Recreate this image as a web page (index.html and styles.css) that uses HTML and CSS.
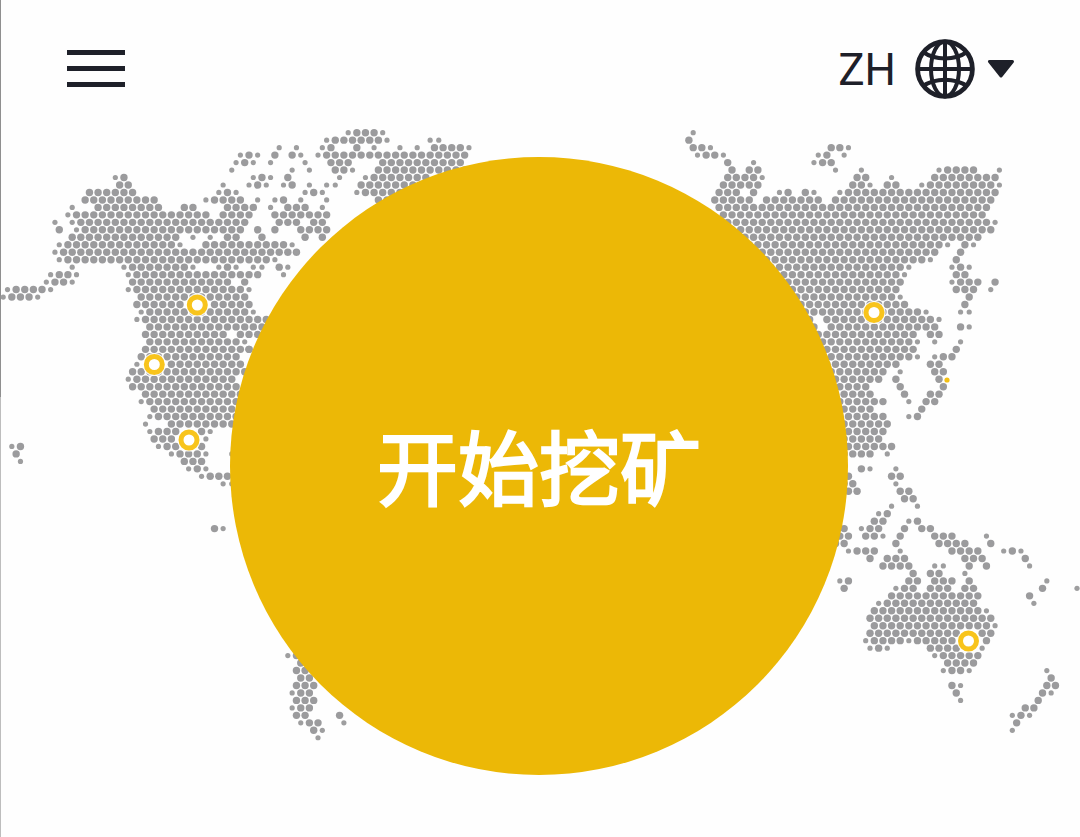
FILE: index.html
```html
<!DOCTYPE html>
<html lang="zh">
<head>
<meta charset="utf-8">
<title>开始挖矿</title>
<link rel="stylesheet" href="styles.css">
</head>
<body>
<main class="stage">
  <svg class="map" id="map" viewBox="0 0 1080 837" width="1080" height="837" aria-hidden="true"></svg>
  <header class="topbar">
    <button class="menu" aria-label="menu"><span></span><span></span><span></span></button>
    <div class="lang">
      <span class="lang-code">ZH</span>
      <svg class="globe" viewBox="0 0 60 60" width="60" height="60" fill="none" stroke="#1e2029" stroke-width="4">
        <circle cx="30" cy="30" r="27.4" stroke-width="4.8"/>
        <ellipse cx="30" cy="30" rx="14" ry="27.4"/>
        <path d="M30 2.4V57.6M2.4 30H57.6"/>
        <path d="M8 13C20 21.500 40 21.500 52 13M8 47C20 38.500 40 38.500 52 47"/>
      </svg>
      <svg class="caret" viewBox="0 0 28 18" width="28" height="18"><path d="M2.500 1.500H25.500L14 16Z" fill="#1e2029" stroke="#1e2029" stroke-width="3" stroke-linejoin="round"/></svg>
    </div>
  </header>
  <button class="mine">开始挖矿</button>
</main>
<script src="map.js"></script>
</body>
</html>
```
FILE: styles.css
```css
* { box-sizing: border-box; }
html, body { margin: 0; padding: 0; }
body { background: #fefefe; font-family: "Roboto", "Noto Sans CJK SC", sans-serif; overflow: hidden; }
.stage { position: relative; width: 1080px; height: 837px; overflow: hidden; background: linear-gradient(to right, #bdbdbd 0, #bdbdbd 1px, transparent 1px); }
.stage::before { content: ""; position: absolute; left: 0; top: 0; width: 1px; height: 397px; background: #8f8f8f; }
.map { position: absolute; left: 0; top: 0; }
.dot { fill: #9b9b9d; r: 3.7px; }
.dot-s { fill: #9e9e9f; r: 2.6px; }
.ring { fill: #fff; stroke: #f8c41c; stroke-width: 5px; r: 8px; }
.ring-halo { fill: #fff; r: 11.6px; opacity: .85; }
.spark { fill: #f3bf14; r: 2.6px; }
.topbar { position: relative; display: flex; justify-content: space-between; align-items: center; height: 137px; padding: 0 65px 0 67px; margin-bottom: -137px; }
.menu { display: flex; flex-direction: column; gap: 11px; width: 58px; padding: 0; margin: 0 0 1px; border: 0; background: none; }
.menu span { display: block; height: 5px; background: #1e2029; }
.lang { display: flex; align-items: center; }
.lang-code { font-size: 44px; line-height: 50px; font-weight: 400; color: #1e2029; margin-right: 18px; padding-top: 3px; }
.globe { display: block; margin-left: 1px; }
.caret { display: block; margin: 0 0 0 12px; }
.mine { position: absolute; left: 230px; top: 157px; width: 618px; height: 618px; border: 0; border-radius: 50%; background: #ecb806; color: #fff; display: flex; align-items: center; justify-content: center; font-family: "Noto Sans CJK SC", sans-serif; font-size: 81px; font-weight: 400; line-height: 1; padding: 0 0 6px 0; -webkit-text-stroke: 2.4px #fff; }
```
FILE: map.js
```js
// Hex-grid world map: each table lists dots per grid row, in 3x-scaled coordinates from an origin x.
var A = 3.2, B = 8.625, Y0 = 132.7, DY = 7.47;
var NS = "http://www.w3.org/2000/svg";
var svg = document.getElementById("map");

var NORTH_AMERICA = {
  0:"1046s 1072-1124 1150s",
  1:"980s 1007-1137 1163s 1290s 1316s",
  2:"838s 890s 968s 994 1072 1124s 1200s 1252s 1304-1382 1408s",
  3:"720s 748 772s 825 877 903s 955s 980-1130 1160-1400",
  4:"708s 735 760s 812s 916s 980-1045 1150-1370",
  5:"695s 877s 929s 994-1040 1058s 1135-1420",
  6:"347s 372 760s 787 812s 865 1018s 1097s 1120-1290",
  7:"360 385 670s 748s 775 800s 852s 877 929s 980s 1007s 1085-1260",
  8:"268-400 655s 683 708s 915s 941 967s 1070s 1095-1220",
  9:"255-465 617s 643-695 720 772s 825s 851 903s 980s 1135-1170",
  10:"218s 294-480 545-590 680-770 812s 864-920 968s",
  11:"205s 230-500 515-630 660-745 825-970 985s",
  12:"165s 218s 245-655 695 720 747 850-900 930-955",
  13:"178 230s 255-640 680-730 775 825 905-975",
  14:"218 243-530 580s 630s 685 710 790 920 965",
  15:"178s 205-515 540s 630-860 877s",
  16:"165s 190-880 890s",
  17:"178s 205-810 830s",
  18:"218s 370s 398-560 580s 655s 683 708s 760s 785s 838 864s",
  19:"150s 178 205 230s 385s 410-760 775s 850s",
  20:"140s 165-190 218s 398-695 735",
  21:"22s 48-125 150s 385s 410-720 745s",
  22:"10s 37-90 115s 415-710 735",
  23:"410-540 640-735",
  24:"425s 450-745 760s",
  25:"412s 437-830",
  26:"450-670 710-830",
  27:"437-680 730-780",
  28:"450-700 740s",
  29:"430-740 755",
  30:"417-720",
  31:"411s 525-720",
  32:"400-740",
  33:"385s 410-700",
  34:"398-710",
  35:"430-710"
};
var SOUTH = {
  36:"425s 450-700",
  37:"463-700",
  38:"451s 477-700",
  39:"437s 515-700",
  40:"450s 477-527 605 630s",
  41:"463-515 618s",
  42:"37s 63 476s 502-527 605",
  43:"50 515s 540-593 618s 690s",
  44:"63s 553-605",
  45:"567s 593 618s",
  46:"605s 631-700",
  47:"670s 690s",
  53:"644 670s",
  70:"864s 890",
  71:"900",
  72:"890 915",
  73:"903 928",
  74:"890-940",
  75:"877s 903 928",
  76:"890-940",
  77:"877s 903 928",
  78:"890 915 1019",
  79:"903s 928 954 1032s",
  80:"941 967s",
  81:"954s"
};
var ASIA = {
  0:"38s",
  1:"26",
  2:"38 65 91s 453 479 505s",
  3:"52s 78 104 130s 413s 440 492s",
  4:"143 220s 401s 427 453",
  5:"156 207 233 466s 543s 776s 802-880 957s",
  6:"143-220 245s 530 556 633s 763-945",
  7:"130-240 517-543 569s 620 646 725s 750-945 957s",
  8:"117-175 220 297s 323 375 401s 478s 504-950",
  9:"104-182 207 259-310 336-415 465-930",
  10:"117-915",
  11:"130-915",
  12:"100-930 944s",
  13:"100-930",
  14:"100-890",
  15:"100-775 802s 854 880s",
  16:"100-763 840",
  17:"100-738 750s 828",
  18:"100-660 685s 815s 841 867s",
  19:"100-660 672s 828 854",
  20:"100-660 815s 841-893 944",
  21:"100-645 828-880 931s",
  22:"100-645 660s 867",
  23:"100-680 853",
  24:"100-720 738s 840s 866s",
  25:"100-390 430-750 776s",
  26:"100-405 445-765 840 866s",
  27:"100-415 440-700 750 776",
  28:"100-695 712s 763s 840s",
  29:"100-700 827",
  30:"100-685 712s 763s 789 815",
  31:"100-630 650 750 776",
  32:"100-620 660s 763 789",
  33:"100-595 646 776",
  34:"100-555 659 789",
  35:"100-580 672 750 776",
  36:"100-610 685s 737 763",
  37:"100-580 724",
  38:"100-610 685s 711"
};
var OCEANIA = {
  39:"50-260",
  40:"50-250",
  41:"50-235",
  42:"50-275",
  43:"50-210 261s",
  45:"183 209s 287s",
  46:"100-148 275 301",
  47:"100-156 287s",
  48:"100-171 300 326",
  49:"313 339",
  50:"274s 352s",
  51:"235s 261",
  52:"222 248 326s 352",
  53:"100-132 183s 209 235 313 365 391",
  54:"100-145 196 222 248s 300 404-456 558s",
  55:"100-132 287 417-495 571",
  56:"145s 171-222 300s 456-534 610s 636 662s",
  57:"209 261-313 495-547 675",
  58:"248-326 403s 429s 507 559 688s",
  59:"339 390 416 493s",
  60:"119s 145 326 352 403-456 507 740s",
  61:"132 287s 313 339 390-440 495 520 726 830s",
  62:"274-533 687",
  63:"235s 261-520 700s",
  64:"222-533 558s",
  65:"209-570",
  66:"222-558 584s",
  67:"209-480 558 571",
  68:"196s 222-300 326s 351-455 558",
  69:"209s 235 261s 390-465 545s",
  70:"403s 429-533",
  71:"442-520",
  72:"429s 455-481 507s 739s",
  73:"752",
  74:"455 481s 739 765",
  75:"468 726 752s",
  76:"481s 713",
  77:"675 701",
  78:"636s 662 688s",
  79:"649",
  80:"636s"
};

function make(cls, x, y) {
  var c = document.createElementNS(NS, "circle");
  c.setAttribute("class", cls);
  c.setAttribute("cx", x);
  c.setAttribute("cy", y);
  svg.appendChild(c);
}
function col(x, r) { return Math.round((x - A) / B - (r % 2) / 2); }
function addTable(table, originX) {
  Object.keys(table).forEach(function (key) {
    var r = +key, y = Y0 + DY * r;
    table[key].split(" ").forEach(function (tok) {
      var small = tok.slice(-1) === "s";
      var parts = tok.replace("s", "").split("-");
      var from = col(originX + parts[0] / 3, r);
      var to = col(originX + (parts[1] || parts[0]) / 3, r);
      for (var k = from; k <= to; k++) {
        make(small ? "dot-s" : "dot", A + B * (k + (r % 2) / 2), y);
      }
    });
  });
}
addTable(NORTH_AMERICA, 0);
addTable(SOUTH, 0);
addTable(ASIA, 680);
addTable(OCEANIA, 800);

[[197.3, 305], [154.3, 364.5], [189, 440], [874, 312.5], [968.5, 641]].forEach(function (p) {
  make("ring-halo", p[0], p[1]);
  make("ring", p[0], p[1]);
});
make("spark", 947, 380);
```
